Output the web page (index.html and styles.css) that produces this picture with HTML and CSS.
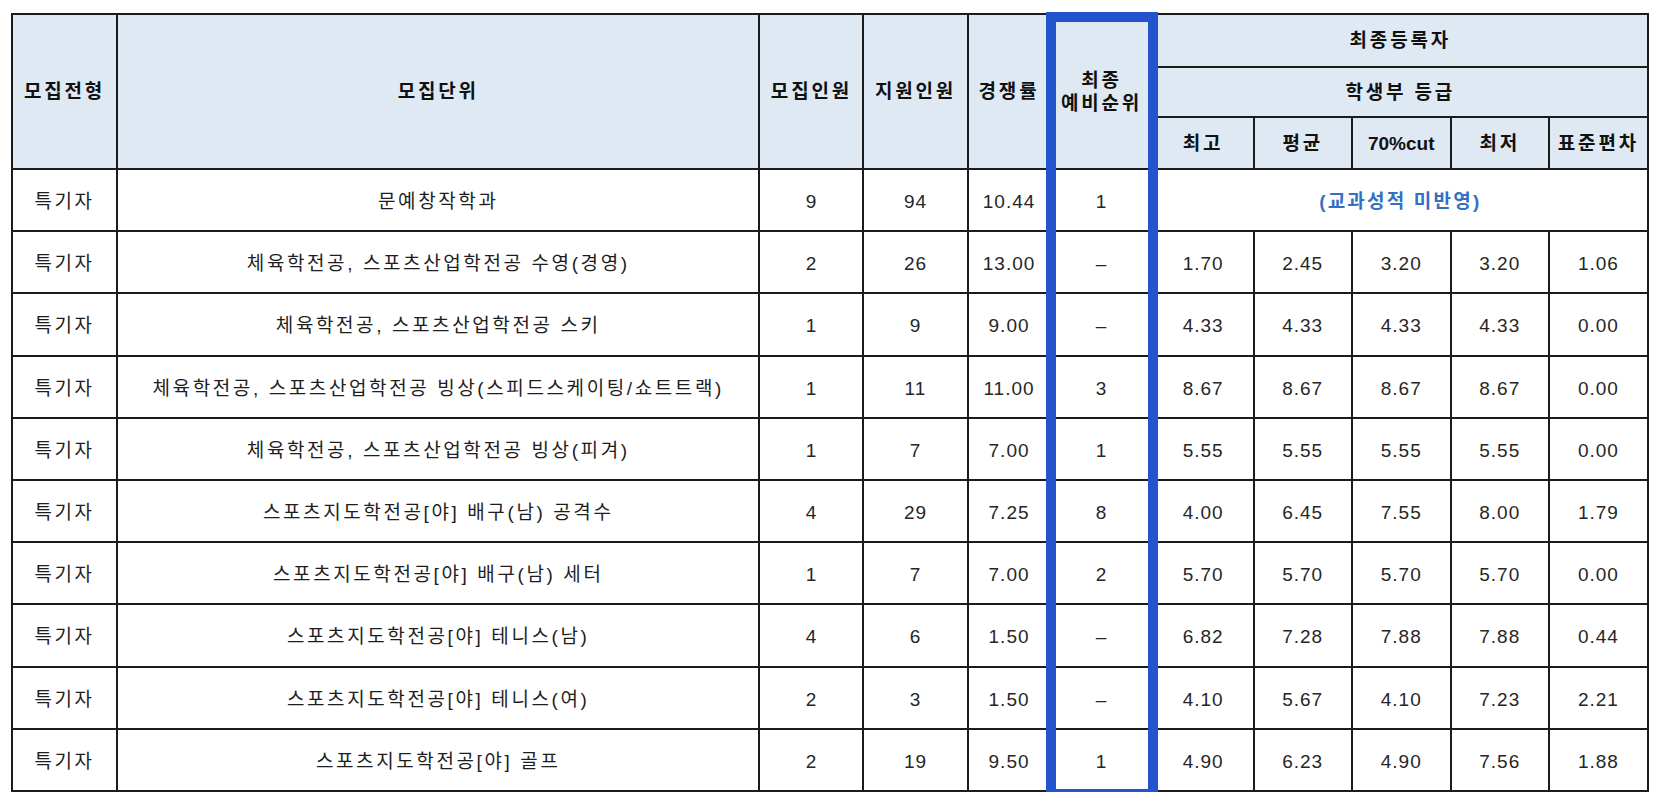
FILE: index.html
```html
<!DOCTYPE html>
<html lang="ko">
<head>
<meta charset="utf-8">
<title>모집결과</title>
<link rel="stylesheet" href="styles.css">
</head>
<body>
<div class="wrap">
  <table class="result">
    <colgroup>
      <col class="c-type">
      <col class="c-unit">
      <col class="c-num">
      <col class="c-num">
      <col class="c-rate">
      <col class="c-wait">
      <col class="c-g1">
      <col class="c-g2">
      <col class="c-g3">
      <col class="c-g4">
      <col class="c-g5">
    </colgroup>
    <thead>
      <tr class="h1">
        <th rowspan="3">모집전형</th>
        <th rowspan="3">모집단위</th>
        <th rowspan="3">모집인원</th>
        <th rowspan="3">지원인원</th>
        <th rowspan="3">경쟁률</th>
        <th rowspan="3">최종<br>예비순위</th>
        <th colspan="5">최종등록자</th>
      </tr>
      <tr class="h2">
        <th colspan="5">학생부 등급</th>
      </tr>
      <tr class="h3">
        <th>최고</th>
        <th>평균</th>
        <th class="latin">70%cut</th>
        <th>최저</th>
        <th>표준편차</th>
      </tr>
    </thead>
    <tbody>
      <tr>
        <td class="ko">특기자</td><td class="ko">문예창작학과</td><td>9</td><td>94</td><td>10.44</td><td>1</td>
        <td colspan="5" class="note">(교과성적 미반영)</td>
      </tr>
      <tr>
        <td class="ko">특기자</td><td class="ko">체육학전공, 스포츠산업학전공 수영(경영)</td><td>2</td><td>26</td><td>13.00</td><td>–</td>
        <td>1.70</td><td>2.45</td><td>3.20</td><td>3.20</td><td>1.06</td>
      </tr>
      <tr>
        <td class="ko">특기자</td><td class="ko">체육학전공, 스포츠산업학전공 스키</td><td>1</td><td>9</td><td>9.00</td><td>–</td>
        <td>4.33</td><td>4.33</td><td>4.33</td><td>4.33</td><td>0.00</td>
      </tr>
      <tr>
        <td class="ko">특기자</td><td class="ko">체육학전공, 스포츠산업학전공 빙상(스피드스케이팅/쇼트트랙)</td><td>1</td><td>11</td><td>11.00</td><td>3</td>
        <td>8.67</td><td>8.67</td><td>8.67</td><td>8.67</td><td>0.00</td>
      </tr>
      <tr>
        <td class="ko">특기자</td><td class="ko">체육학전공, 스포츠산업학전공 빙상(피겨)</td><td>1</td><td>7</td><td>7.00</td><td>1</td>
        <td>5.55</td><td>5.55</td><td>5.55</td><td>5.55</td><td>0.00</td>
      </tr>
      <tr>
        <td class="ko">특기자</td><td class="ko">스포츠지도학전공[야] 배구(남) 공격수</td><td>4</td><td>29</td><td>7.25</td><td>8</td>
        <td>4.00</td><td>6.45</td><td>7.55</td><td>8.00</td><td>1.79</td>
      </tr>
      <tr>
        <td class="ko">특기자</td><td class="ko">스포츠지도학전공[야] 배구(남) 세터</td><td>1</td><td>7</td><td>7.00</td><td>2</td>
        <td>5.70</td><td>5.70</td><td>5.70</td><td>5.70</td><td>0.00</td>
      </tr>
      <tr>
        <td class="ko">특기자</td><td class="ko">스포츠지도학전공[야] 테니스(남)</td><td>4</td><td>6</td><td>1.50</td><td>–</td>
        <td>6.82</td><td>7.28</td><td>7.88</td><td>7.88</td><td>0.44</td>
      </tr>
      <tr>
        <td class="ko">특기자</td><td class="ko">스포츠지도학전공[야] 테니스(여)</td><td>2</td><td>3</td><td>1.50</td><td>–</td>
        <td>4.10</td><td>5.67</td><td>4.10</td><td>7.23</td><td>2.21</td>
      </tr>
      <tr>
        <td class="ko">특기자</td><td class="ko">스포츠지도학전공[야] 골프</td><td>2</td><td>19</td><td>9.50</td><td>1</td>
        <td>4.90</td><td>6.23</td><td>4.90</td><td>7.56</td><td>1.88</td>
      </tr>
    </tbody>
  </table>
  <div class="highlight"></div>
</div>
</body>
</html>
```

FILE: styles.css
```css
html, body {
  margin: 0;
  padding: 0;
  background: #ffffff;
}

.wrap {
  position: relative;
  padding: 13px 0 0 11px;
}

.result {
  border-collapse: collapse;
  table-layout: fixed;
  width: 1638px;
  font-family: "Liberation Sans", "Noto Sans CJK KR", sans-serif;
  font-size: 19px;
  color: #1e1e1e;
}

.c-type { width: 105px; }
.c-unit { width: 642px; }
.c-num { width: 104px; }
.c-rate { width: 83px; }
.c-wait { width: 102px; }
.c-g1 { width: 101px; }
.c-g2 { width: 98px; }
.c-g3 { width: 99px; }
.c-g4 { width: 98px; }
.c-g5 { width: 99px; }

.result th,
.result td {
  border: 2px solid #1b1b1b;
  text-align: center;
  vertical-align: middle;
  padding: 0;
  line-height: 23px;
}

.result th {
  background: #dfe9f4;
  font-weight: 700;
  color: #111111;
  letter-spacing: 2.8px;
}

.result th.latin {
  font-size: 19px;
  letter-spacing: 0;
}

.h1 { height: 53px; }
.h2 { height: 50px; }
.h3 { height: 52px; }

.result tbody tr { height: 62.2px; }

.result td {
  padding-top: 3px;
  letter-spacing: 1px;
  color: #262626;
}

.result td.ko {
  letter-spacing: 2.6px;
  color: #1e1e1e;
}

.result td.note {
  color: #3370c2;
  font-weight: 700;
  letter-spacing: 2.2px;
}

.highlight {
  position: absolute;
  left: 1046px;
  top: 12px;
  width: 92px;
  height: 767px;
  border: 10px solid #2353cd;
  pointer-events: none;
}
```
